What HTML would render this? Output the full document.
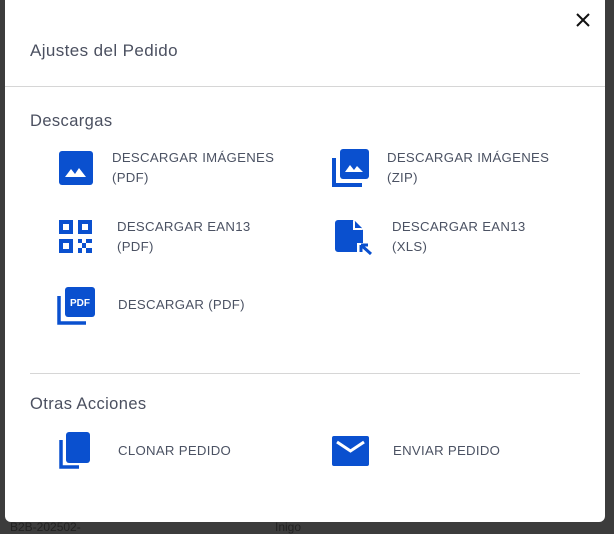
<!DOCTYPE html>
<html><head><style>
body{margin:0;width:614px;height:529px;background:#3c3c3c;position:relative;overflow:hidden;font-family:"Liberation Sans",sans-serif}
.m{position:absolute;left:5px;top:-6px;width:600px;height:528px;background:#fff;border-radius:6px}
.t{position:absolute;color:#4b5060;font-size:17px;letter-spacing:0.4px}
.l{position:absolute;color:#4b5263;font-size:13.2px;line-height:20px;letter-spacing:0.3px}
.hr{position:absolute;height:1px;background:#d6d6d6}
svg{position:absolute}
.bg{position:absolute;color:#222;font-size:12px}
</style></head><body>
<div class="bg" style="left:10px;top:520px">B2B-202502-</div>
<div class="bg" style="left:275px;top:520px">Inigo</div>
<div class="m"></div>
<svg style="left:575px;top:12px" width="16" height="16" viewBox="0 0 16 16"><path d="M2 2L14 14M14 2L2 14" stroke="#111" stroke-width="2"/></svg>
<div class="t" style="left:30px;top:41px">Ajustes del Pedido</div>
<div class="hr" style="left:5px;width:600px;top:86px"></div>
<div class="t" style="left:30px;top:112px;font-size:16.5px">Descargas</div>

<svg style="left:59px;top:151px" width="34" height="34" viewBox="0 0 34 34"><rect width="34" height="34" rx="3" fill="#0a50cf"/><path d="M6 26L12 18L16 23L20 17L27 26Z" fill="#fff"/></svg>
<div class="l" style="left:112px;top:148px">DESCARGAR IMÁGENES<br>(PDF)</div>

<svg style="left:332px;top:149px" width="37" height="38" viewBox="0 0 37 38"><path d="M2 9V36H30" stroke="#0a50cf" stroke-width="4" fill="none"/><rect x="8" y="0" width="29" height="30" rx="3" fill="#0a50cf"/><path d="M13 23L18 16L22 21L25 17L31 23Z" fill="#fff"/></svg>
<div class="l" style="left:387px;top:148px">DESCARGAR IMÁGENES<br>(ZIP)</div>

<svg style="left:59px;top:220px" width="34" height="34" viewBox="0 0 34 34" fill="#0a50cf"><path fill-rule="evenodd" d="M0 0h14v14H0zM4 4v6h6V4zM19 0h14v14H19zM23 4v6h6V4zM0 19h14v14H0zM4 23v6h6v-6z"/><rect x="19" y="19" width="4" height="4"/><rect x="27" y="19" width="6" height="4"/><rect x="23" y="23" width="4" height="5"/><rect x="19" y="28" width="4" height="5"/><rect x="27" y="28" width="6" height="5"/></svg>
<div class="l" style="left:117px;top:217px">DESCARGAR EAN13<br>(PDF)</div>

<svg style="left:335px;top:220px" width="38" height="35" viewBox="0 0 38 35"><path d="M3 0H18L28 10V23H22V32H3a3 3 0 0 1-3-3V3a3 3 0 0 1 3-3z" fill="#0a50cf"/><path d="M18 0V10H28Z" fill="#fff"/><path d="M20 1V8H27" fill="#0a50cf"/><path d="M26 25H33M26 25V32M26 25L36 34" stroke="#0a50cf" stroke-width="3" fill="none"/></svg>
<div class="l" style="left:392px;top:217px">DESCARGAR EAN13<br>(XLS)</div>

<svg style="left:57px;top:287px" width="38" height="38" viewBox="0 0 38 38"><path d="M2 9V36H29" stroke="#0a50cf" stroke-width="3.5" fill="none"/><rect x="8" y="0" width="30" height="30" rx="3" fill="#0a50cf"/><text x="23" y="19" text-anchor="middle" font-size="10" font-weight="bold" fill="#fff" font-family="Liberation Sans">PDF</text></svg>
<div class="l" style="left:118px;top:295px">DESCARGAR (PDF)</div>

<div class="hr" style="left:30px;width:550px;top:373px"></div>
<div class="t" style="left:30px;top:395px;font-size:16.5px">Otras Acciones</div>

<svg style="left:59px;top:432px" width="32" height="38" viewBox="0 0 32 38"><path d="M2 8V35H20" stroke="#0a50cf" stroke-width="3.5" fill="none"/><rect x="7" y="0" width="24" height="31" rx="3" fill="#0a50cf"/></svg>
<div class="l" style="left:118px;top:441px">CLONAR PEDIDO</div>

<svg style="left:332px;top:436px" width="37" height="30" viewBox="0 0 37 30"><rect width="37" height="30" rx="2" fill="#0a50cf"/><path d="M5 6L18.5 15L32 6" stroke="#fff" stroke-width="3" fill="none"/></svg>
<div class="l" style="left:393px;top:441px">ENVIAR PEDIDO</div>
</body></html>
